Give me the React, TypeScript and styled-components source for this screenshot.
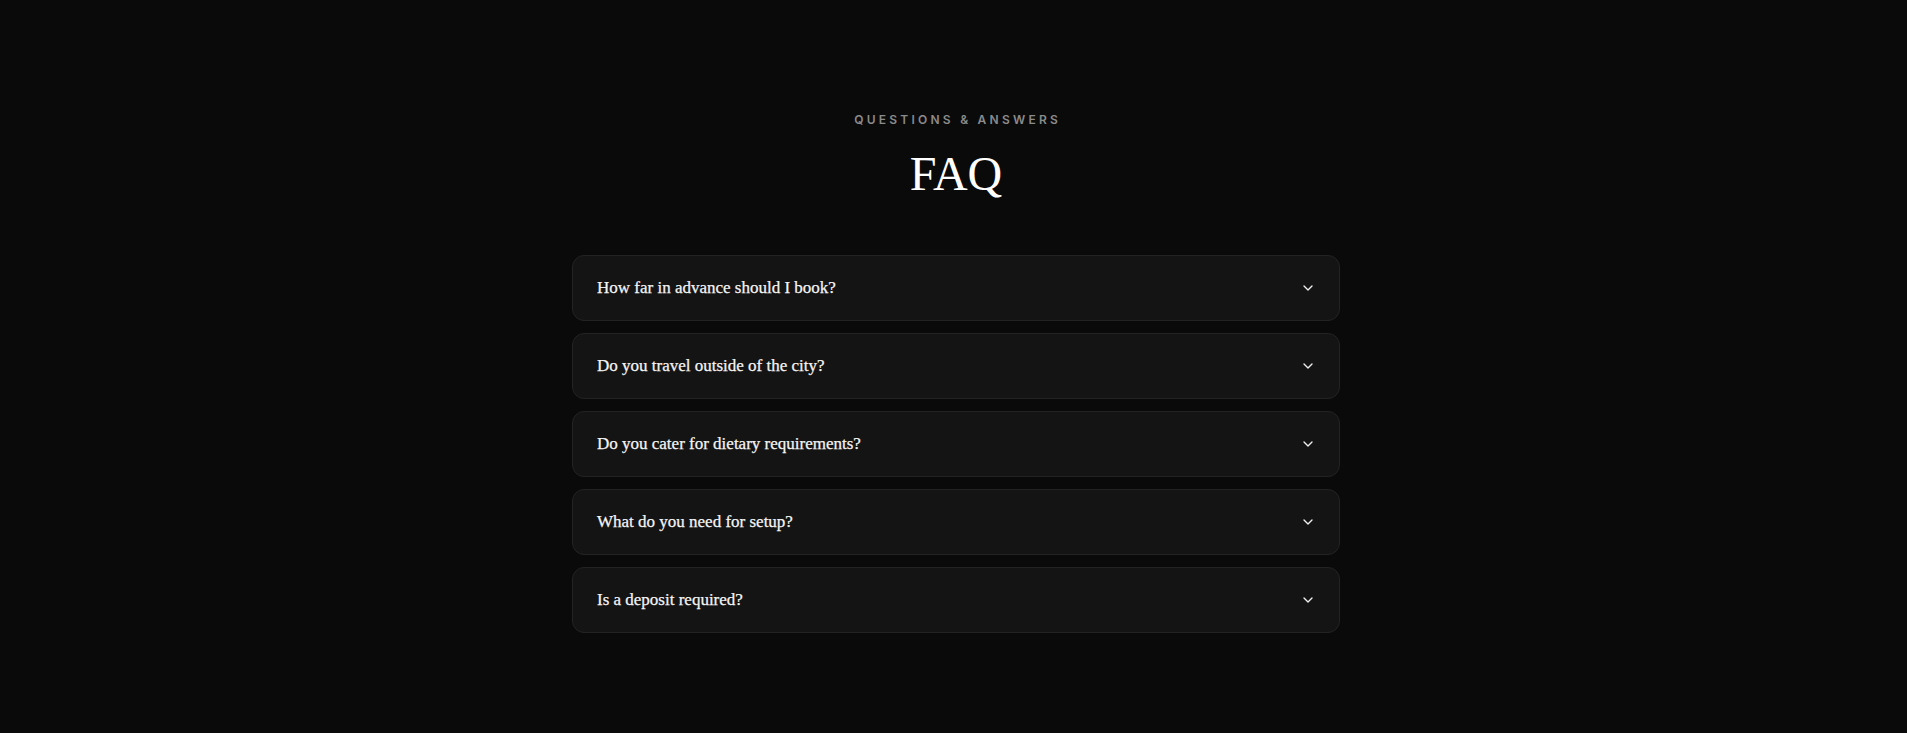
import React from "react";
import styled, { createGlobalStyle } from "styled-components";
import { ChevronDown } from "lucide-react";

const Global = createGlobalStyle`
  html, body { margin: 0; padding: 0; background: #0a0a0a; }
  body { font-family: "Liberation Serif", serif; -webkit-font-smoothing: antialiased; }
  * { box-sizing: border-box; }
`;

const Page = styled.main`
  min-height: 733px;
  background: #0a0a0a;
  display: flex;
  justify-content: center;
  padding: 112px 0 96px 5px;
`;

const Column = styled.section`
  width: 768px;
  display: flex;
  flex-direction: column;
  align-items: center;
`;

const Eyebrow = styled.p`
  margin: 0;
  font-family: Inter, "Liberation Sans", sans-serif;
  font-size: 12px;
  font-weight: 600;
  line-height: 16px;
  letter-spacing: 0.27em;
  margin-right: -0.27em;
  text-transform: uppercase;
  color: #8a8a8a;
`;

const Title = styled.h2`
  margin: 18px 0 0;
  font-family: "Liberation Serif", serif;
  font-weight: 400;
  font-size: 48px;
  line-height: 56px;
  color: #ffffff;
`;

const List = styled.div`
  width: 100%;
  margin-top: 53px;
  display: flex;
  flex-direction: column;
  gap: 12px;
`;

const Item = styled.div`
  background: #141414;
  border: 1px solid #232323;
  border-radius: 12px;
`;

const Trigger = styled.button`
  width: 100%;
  display: flex;
  align-items: center;
  justify-content: space-between;
  padding: 20px 23px 20px 24px;
  background: transparent;
  border: 0;
  cursor: pointer;
  color: #f5f5f5;
  text-align: left;
`;

const Question = styled.span`
  font-family: "Liberation Serif", serif;
  font-size: 17px;
  line-height: 24px;
  font-weight: 400;
  color: #f5f5f5;
  -webkit-text-stroke: 0.25px #f5f5f5;
`;

const Icon = styled(ChevronDown)`
  flex: none;
  color: #f0f0f0;
`;

const faqs = [
  "How far in advance should I book?",
  "Do you travel outside of the city?",
  "Do you cater for dietary requirements?",
  "What do you need for setup?",
  "Is a deposit required?",
];

export default function App() {
  return (
    <>
      <Global />
      <Page>
        <Column>
          <Eyebrow>Questions &amp; Answers</Eyebrow>
          <Title>FAQ</Title>
          <List>
            {faqs.map((q) => (
              <Item key={q}>
                <Trigger type="button">
                  <Question>{q}</Question>
                  <Icon size={16} strokeWidth={2} />
                </Trigger>
              </Item>
            ))}
          </List>
        </Column>
      </Page>
    </>
  );
}
